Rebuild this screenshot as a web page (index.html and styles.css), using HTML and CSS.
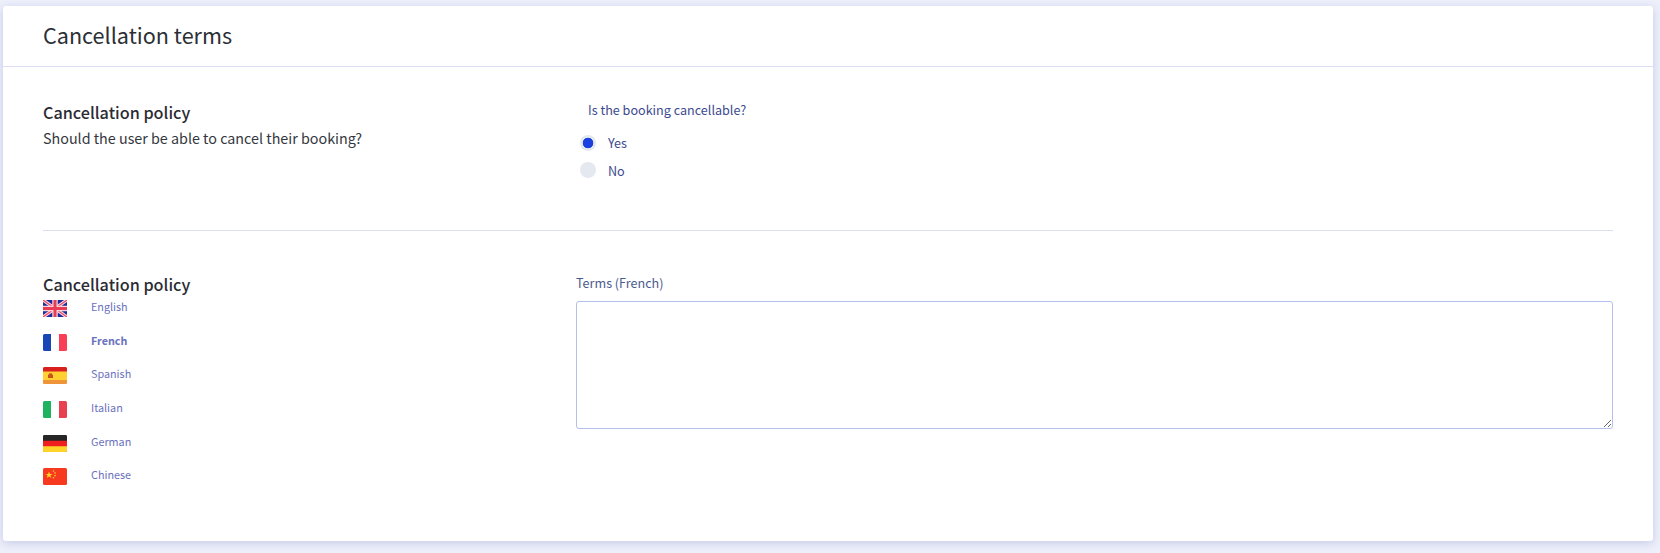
FILE: index.html
```html
<!DOCTYPE html>
<html lang="en">
<head>
<meta charset="utf-8">
<title>Cancellation terms</title>
<link rel="stylesheet" href="styles.css">
</head>
<body>
<main class="card">
  <header class="card-header"><h1 class="card-title">Cancellation terms</h1></header>
  <div class="card-body">
    <section class="row row-policy">
      <div class="col-left">
        <h2 class="heading">Cancellation policy</h2>
        <p class="desc">Should the user be able to cancel their booking?</p>
      </div>
      <div class="col-right col-radio">
        <div class="radio-title">Is the booking cancellable?</div>
        <div class="radio-row"><span class="radio radio-on"></span><span class="radio-label">Yes</span></div>
        <div class="radio-row"><span class="radio"></span><span class="radio-label">No</span></div>
      </div>
    </section>
    <hr class="divider">
    <section class="row row-terms">
      <div class="col-left">
        <h2 class="heading">Cancellation policy</h2>
        <ul class="langs">
          <li class="lang">
            <svg class="flag" viewBox="0 0 24 17"><rect width="24" height="17" rx="1.5" fill="#1a2a9c"/><path d="M0 0L24 17M24 0L0 17" stroke="#f7d5dc" stroke-width="3.4"/><path d="M0 0L24 17M24 0L0 17" stroke="#ef4a63" stroke-width="1.2"/><path d="M12 0V17M0 8.500H24" stroke="#f7d5dc" stroke-width="5.500"/><path d="M12 0V17M0 8.500H24" stroke="#ea3b55" stroke-width="3"/></svg>
            <span class="lang-name">English</span>
          </li>
          <li class="lang lang-active">
            <svg class="flag" viewBox="0 0 24 17"><rect width="24" height="17" rx="1.500" fill="#fff"/><path d="M8 0H1.500A1.500 1.500 0 0 0 0 1.500V15.500A1.500 1.500 0 0 0 1.500 17H8Z" fill="#1a47b8"/><path d="M16 0H22.500A1.500 1.500 0 0 1 24 1.500V15.500A1.500 1.500 0 0 1 22.500 17H16Z" fill="#f93f55"/></svg>
            <span class="lang-name">French</span>
          </li>
          <li class="lang">
            <svg class="flag" viewBox="0 0 24 17"><rect width="24" height="17" rx="1.500" fill="#ffd02f"/><path d="M0 4.500V1.500A1.500 1.500 0 0 1 1.500 0H22.500A1.500 1.500 0 0 1 24 1.500V4.500Z" fill="#d8201f"/><path d="M0 13H24V15.500A1.500 1.500 0 0 1 22.500 17H1.500A1.500 1.500 0 0 1 0 15.500Z" fill="#f0943a"/><path d="M5 7.500h5v3.500H5z" fill="#c8531d"/><path d="M6 6.500h3v1H6z" fill="#a8321a"/></svg>
            <span class="lang-name">Spanish</span>
          </li>
          <li class="lang">
            <svg class="flag" viewBox="0 0 24 17"><rect width="24" height="17" rx="1.500" fill="#fff"/><path d="M8 0H1.500A1.500 1.500 0 0 0 0 1.500V15.500A1.500 1.500 0 0 0 1.500 17H8Z" fill="#1eb35f"/><path d="M16 0H22.500A1.500 1.500 0 0 1 24 1.500V15.500A1.500 1.500 0 0 1 22.500 17H16Z" fill="#e8404f"/></svg>
            <span class="lang-name">Italian</span>
          </li>
          <li class="lang">
            <svg class="flag" viewBox="0 0 24 17"><rect width="24" height="17" rx="1.500" fill="#f01f1f"/><path d="M0 5.700V1.500A1.500 1.500 0 0 1 1.500 0H22.500A1.500 1.500 0 0 1 24 1.500V5.700Z" fill="#262626"/><path d="M0 11.300H24V15.500A1.500 1.500 0 0 1 22.500 17H1.500A1.500 1.500 0 0 1 0 15.500Z" fill="#ffd42a"/></svg>
            <span class="lang-name">German</span>
          </li>
          <li class="lang">
            <svg class="flag" viewBox="0 0 24 17"><rect width="24" height="17" rx="1.500" fill="#f6391f"/><path d="M6 3.500l.9 2.500h2.600l-2.100 1.600.8 2.500L6 8.600l-2.200 1.500.8-2.500L2.500 6h2.600Z" fill="#fdd128"/><g fill="#fdd128"><circle cx="10.500" cy="3" r=".8"/><circle cx="12" cy="5" r=".8"/><circle cx="12" cy="7.600" r=".8"/><circle cx="10.500" cy="9.800" r=".8"/></g></svg>
            <span class="lang-name">Chinese</span>
          </li>
        </ul>
      </div>
      <div class="col-right col-field">
        <label class="field-label" for="terms">Terms (French)</label>
        <textarea class="field-input" id="terms"></textarea>
      </div>
    </section>
  </div>
</main>
</body>
</html>
```
FILE: styles.css
```css
* { box-sizing: border-box; }
html, body { height: 100%; }
body {
  margin: 0;
  padding: 6px 7px 12px 3px;
  background: #eef0fb;
  font-family: "Noto Sans CJK SC", "Noto Sans", sans-serif;
  color: #2b2b33;
  overflow: hidden;
}
.card {
  height: 535px;
  background: #fff;
  border-radius: 3px;
  box-shadow: 0 2px 10px rgba(120, 130, 190, .35);
}
.card-header {
  height: 61px;
  padding: 0 40px 3px;
  border-bottom: 1px solid #dde0f7;
  display: flex;
  align-items: center;
}
.card-title {
  margin: 0;
  font-size: 21.600px;
  font-weight: 400;
  line-height: 32px;
  color: #2b2f36;
}
.card-body { padding: 0 40px; }
.row { display: flex; }
.row-policy { height: 163px; padding-top: 33px; }
.row-terms { padding-top: 41px; }
.col-left { width: 533px; flex: none; }
.col-right { flex: 1; min-width: 0; }
.heading {
  margin: 0;
  font-size: 16.200px;
  font-weight: 500;
  line-height: 24px;
  color: #2b2b33;
}
.desc {
  margin: 2px 0 0;
  font-size: 14.320px;
  line-height: 24px;
  color: #343740;
}
.col-radio { padding: 1px 0 0 4px; }
.radio-title {
  margin: 0 0 10px 8px;
  font-size: 12.600px;
  line-height: 18px;
  color: #3c4a8f;
}
.radio-row {
  display: flex;
  align-items: center;
  height: 27.500px;
  font-size: 12.600px;
  color: #3c4a8f;
}
.radio {
  width: 16px;
  height: 16px;
  border-radius: 50%;
  background: #e4e8ef;
  flex: none;
}
.radio-on {
  background: radial-gradient(circle, #1c3fe0 0, #1c3fe0 5px, #e4e8ef 5.600px);
}
.radio-label { margin-left: 12px; }
.divider {
  margin: 0;
  border: 0;
  border-top: 1px solid #dde0f0;
}
.langs {
  list-style: none;
  margin: 4px 0 0;
  padding: 0;
  display: flex;
  flex-direction: column;
  gap: 16.700px;
}
.lang {
  display: flex;
  align-items: center;
  height: 17px;
  font-size: 10.800px;
  color: #6a72bd;
}
.lang-name { margin-bottom: 5px; }
.lang-active { font-weight: 700; }
.flag { width: 24px; height: 17px; flex: none; margin-right: 24px; }
.col-field { display: flex; flex-direction: column; padding-top: 2px; }
.field-label {
  font-size: 12.600px;
  line-height: 18px;
  color: #4a5a8e;
  margin-bottom: 9px;
}
.field-input {
  width: 100%;
  height: 128px;
  border: 1px solid #b4c0ec;
  border-radius: 3px;
  background: #fff;
  resize: both;
  outline: none;
  padding: 8px;
  display: block;
}
```
